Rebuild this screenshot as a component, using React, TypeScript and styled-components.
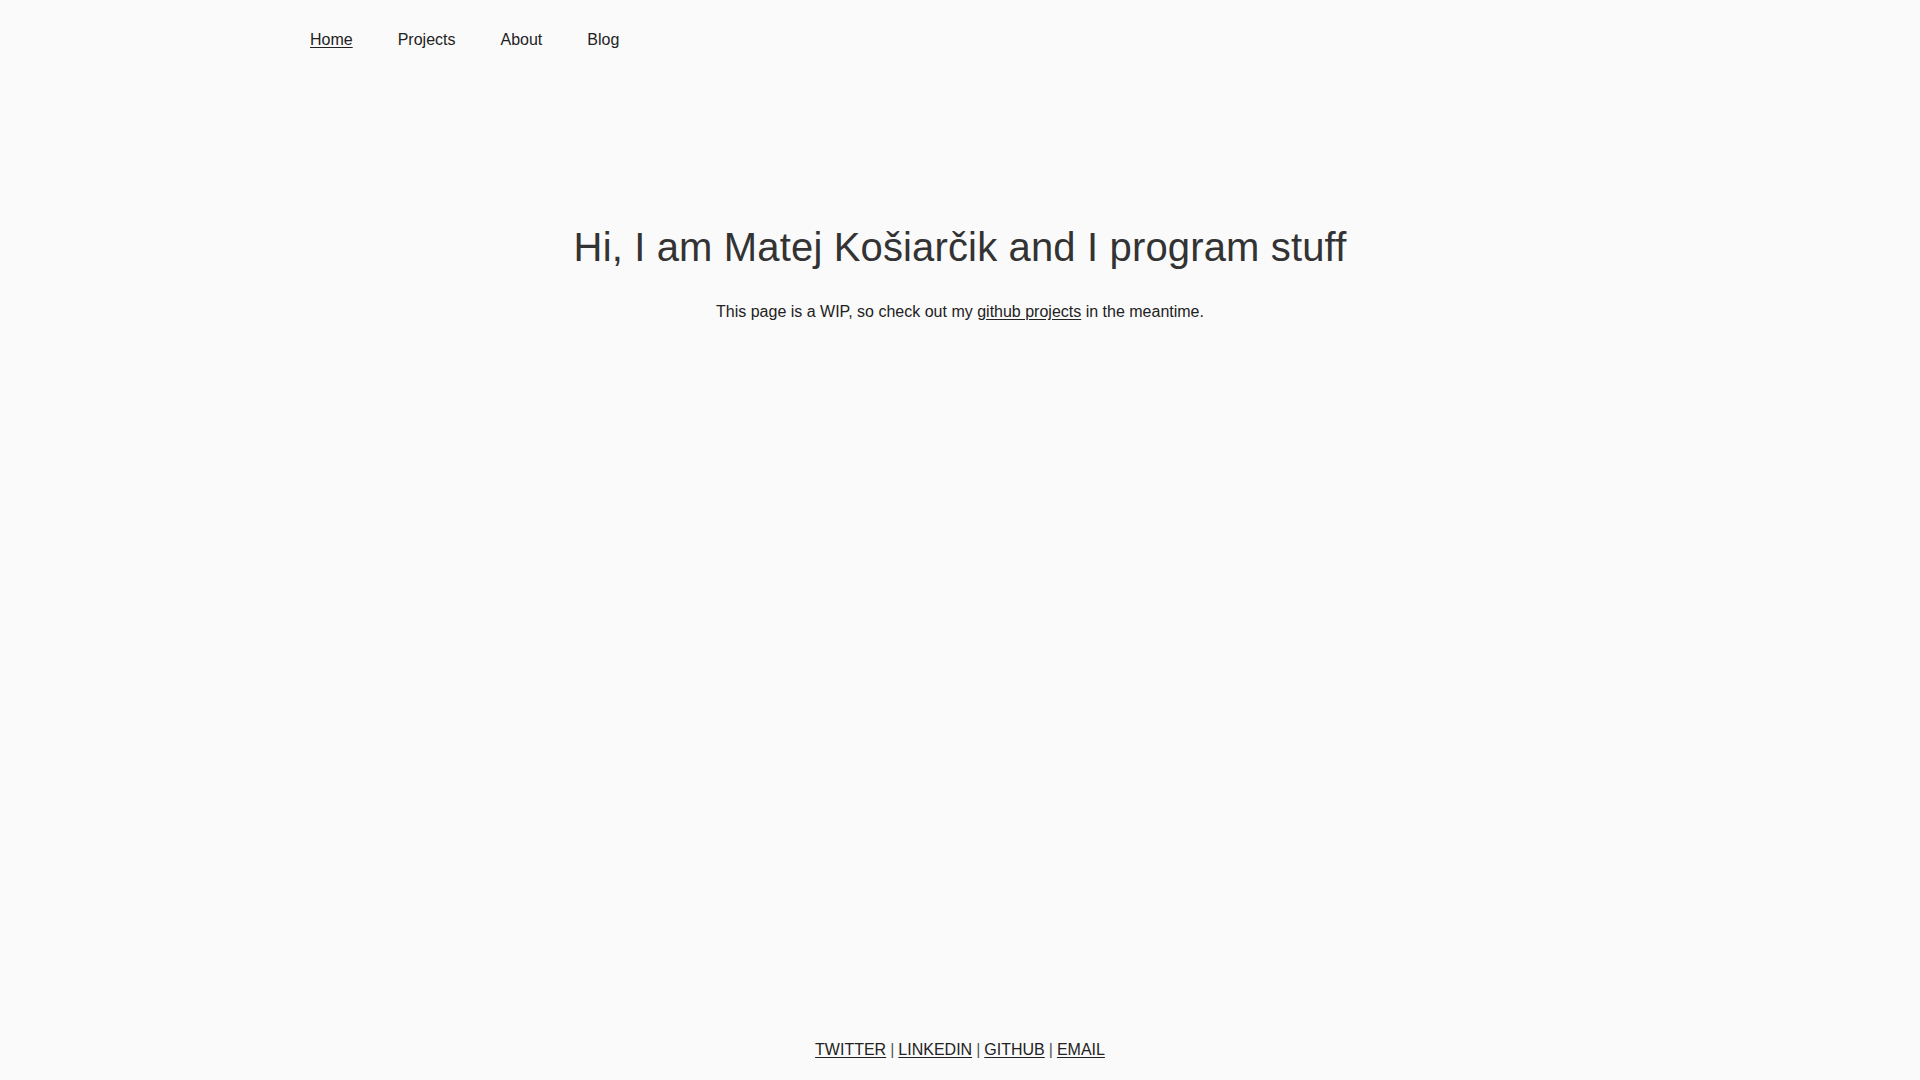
import React from "react";
import styled, { createGlobalStyle } from "styled-components";

const GlobalStyle = createGlobalStyle`
  html, body {
    margin: 0;
    padding: 0;
    background: #fafafa;
  }
  body {
    font-family: "Liberation Sans", Arial, Helvetica, sans-serif;
    color: #222;
  }
`;

const Page = styled.div`
  min-height: 100vh;
  display: flex;
  flex-direction: column;
  background: #fafafa;
`;

const Nav = styled.nav`
  width: 1300px;
  margin: 0 auto;
  padding-top: 31px;
  display: flex;
  gap: 45px;
`;

const NavLink = styled.a<{ $active?: boolean }>`
  font-size: 16px;
  line-height: 18px;
  color: #222;
  text-decoration: ${(p) => (p.$active ? "underline" : "none")};
  text-underline-offset: 2px;
  cursor: pointer;
`;

const Main = styled.main`
  flex: 1;
  display: flex;
  flex-direction: column;
  align-items: center;
  padding-top: 175px;
`;

const Heading = styled.h1`
  margin: 0;
  font-size: 40px;
  line-height: 46px;
  font-weight: 400;
  color: #333;
  letter-spacing: 0.15px;
`;

const Lead = styled.p`
  margin: 33px 0 0;
  font-size: 16px;
  line-height: 18px;
  color: #222;
`;

const InlineLink = styled.a`
  color: #222;
  text-decoration: underline;
  text-underline-offset: 2px;
`;

const Footer = styled.footer`
  display: flex;
  justify-content: center;
  align-items: baseline;
  gap: 4px;
  padding-bottom: 21px;
  font-size: 16px;
  line-height: 18px;
  color: #222;
`;

const Sep = styled.span`
  color: #555;
`;

const socials = ["TWITTER", "LINKEDIN", "GITHUB", "EMAIL"];

export default function App() {
  return (
    <>
      <GlobalStyle />
      <Page>
        <Nav>
          <NavLink $active>Home</NavLink>
          <NavLink>Projects</NavLink>
          <NavLink>About</NavLink>
          <NavLink>Blog</NavLink>
        </Nav>
        <Main>
          <Heading>Hi, I am Matej Košiarčik and I program stuff</Heading>
          <Lead>
            This page is a WIP, so check out my{" "}
            <InlineLink>github projects</InlineLink> in the meantime.
          </Lead>
        </Main>
        <Footer>
          {socials.map((s, i) => (
            <React.Fragment key={s}>
              {i > 0 && <Sep>|</Sep>}
              <InlineLink>{s}</InlineLink>
            </React.Fragment>
          ))}
        </Footer>
      </Page>
    </>
  );
}
